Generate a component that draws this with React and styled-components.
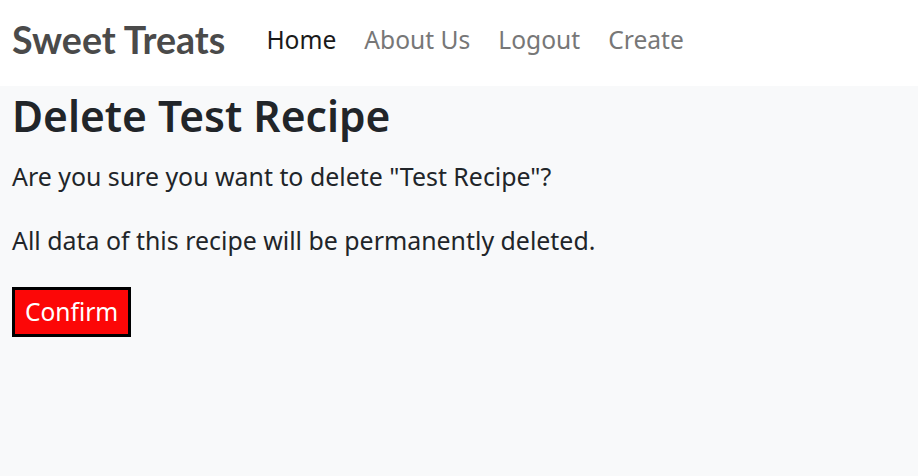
import React from "react";
import styled, { createGlobalStyle } from "styled-components";

const GlobalStyle = createGlobalStyle`
  html, body {
    margin: 0;
    padding: 0;
    background-color: #f8f9fa;
    font-family: "Noto Sans", "Open Sans", sans-serif;
    color: #212529;
  }
`;

const Navbar = styled.nav`
  height: 86px;
  background-color: #ffffff;
  display: flex;
  align-items: center;
  padding: 0 12px;
`;

const Brand = styled.a`
  font-family: "Lato", sans-serif;
  font-weight: 700;
  font-size: 37.6px;
  color: #4a4a4a;
  text-decoration: none;
  margin-right: 41px;
  margin-top: -8px;
`;

const NavList = styled.div`
  display: flex;
  gap: 28px;
  margin-top: -8px;
`;

const NavLink = styled.a`
  font-size: 24.6px;
  color: ${(p) => (p.$active ? "#1a1a1a" : "#777777")};
  text-decoration: none;
`;

const Main = styled.main`
  padding: 0 12px;
`;

const Title = styled.h1`
  font-size: 42.5px;
  font-weight: 600;
  margin: 4px 0 17px;
  line-height: 1.2;
`;

const Text = styled.p`
  font-size: 24.9px;
  margin: 0 0 27px;
  line-height: 1.5;
`;

const ConfirmButton = styled.button`
  font-family: "Noto Sans", sans-serif;
  font-size: 24.5px;
  color: #ffffff;
  background-color: #fc0707;
  border: 3px solid #000000;
  padding: 4px 10px;
  line-height: 36px;
`;

export default function App() {
  return (
    <>
      <GlobalStyle />
      <Navbar>
        <Brand href="#">Sweet Treats</Brand>
        <NavList>
          <NavLink href="#" $active>Home</NavLink>
          <NavLink href="#">About Us</NavLink>
          <NavLink href="#">Logout</NavLink>
          <NavLink href="#">Create</NavLink>
        </NavList>
      </Navbar>
      <Main>
        <Title>Delete Test Recipe</Title>
        <Text>Are you sure you want to delete "Test Recipe"?</Text>
        <Text>All data of this recipe will be permanently deleted.</Text>
        <ConfirmButton>Confirm</ConfirmButton>
      </Main>
    </>
  );
}
